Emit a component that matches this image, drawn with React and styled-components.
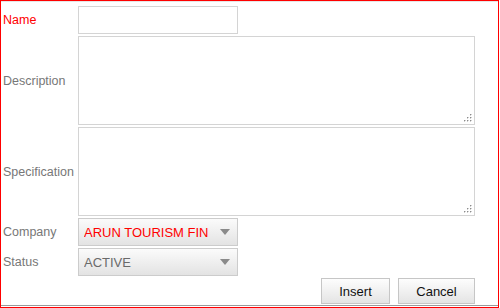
import React from "react";
import styled, { createGlobalStyle } from "styled-components";

const Global = createGlobalStyle`
  html, body { margin: 0; padding: 0; background: #fff; }
  body { font-family: "Liberation Sans", Arial, sans-serif; }
`;

const Frame = styled.div`
  width: 499px;
  height: 308px;
  box-sizing: border-box;
  border: 1px solid #ff0000;
  background: #fff;
`;

const Inner = styled.div`
  height: 305px;
  box-sizing: border-box;
  border-top: 1px solid #e6e6e6;
  border-bottom: 1px solid #9a9a9a;
  padding: 4px 0 1px 0;
`;

const FormGrid = styled.div`
  display: grid;
  grid-template-columns: 77px 397px;
  grid-template-rows: 28px 89px 89px 28px 28px 26px;
  row-gap: 2px;
`;

const Label = styled.label`
  display: flex;
  align-items: center;
  padding-left: 2px;
  font-size: 12.5px;
  color: ${(p) => (p.$required ? "#ff0000" : "#777777")};
  white-space: nowrap;
`;

const TextInput = styled.input`
  width: 160px;
  height: 28px;
  box-sizing: border-box;
  border: 1px solid #d4d4d4;
  margin: 0;
  padding: 0 5px;
  font: 13px "Liberation Sans", Arial, sans-serif;
  outline: none;
`;

const AreaWrap = styled.div`
  position: relative;
  width: 397px;
  height: 89px;
`;

const Area = styled.textarea`
  display: block;
  width: 100%;
  height: 100%;
  box-sizing: border-box;
  border: 1px solid #d4d4d4;
  margin: 0;
  padding: 3px 5px;
  resize: none;
  outline: none;
  font: 13px "Liberation Sans", Arial, sans-serif;
`;

const Grip = styled.svg`
  position: absolute;
  right: 3px;
  bottom: 3px;
  width: 9px;
  height: 9px;
  pointer-events: none;
`;

const SelectWrap = styled.div`
  position: relative;
  width: 160px;
  height: 28px;
`;

const Select = styled.select`
  appearance: none;
  -webkit-appearance: none;
  width: 100%;
  height: 100%;
  box-sizing: border-box;
  margin: 0;
  border: 1px solid #cccccc;
  border-radius: 0;
  padding: 0 29px 0 5px;
  background: linear-gradient(#fbfbfb, #e3e3e3);
  font: 13px "Liberation Sans", Arial, sans-serif;
  color: ${(p) => (p.$accent ? "#ff0000" : "#6a6a6a")};
  outline: none;
`;

const Arrow = styled.svg`
  position: absolute;
  right: 8px;
  top: 11px;
  width: 10px;
  height: 6px;
  pointer-events: none;
`;

const Actions = styled.div`
  grid-column: 2;
  display: flex;
  justify-content: flex-end;
  gap: 8px;
`;

const Button = styled.button`
  width: ${(p) => p.$w}px;
  height: 26px;
  box-sizing: border-box;
  margin: 0;
  padding: 0;
  border: 1px solid #c6c6c6;
  border-radius: 0;
  background: linear-gradient(#fdfdfd, #e4e4e4);
  font: 13px "Liberation Sans", Arial, sans-serif;
  color: #111;
`;

function ResizeGrip() {
  const dots = [
    [7, 1],
    [4, 4],
    [7, 4],
    [1, 7],
    [4, 7],
    [7, 7],
  ];
  return (
    <Grip viewBox="0 0 9 9">
      {dots.map(([x, y]) => (
        <g key={`${x}-${y}`}>
          <rect x={x} y={y} width="1" height="1" fill="#8c8c8c" />
          <rect x={x + 1} y={y} width="1" height="1" fill="#d0d0d0" />
          <rect x={x} y={y + 1} width="1" height="1" fill="#d0d0d0" />
        </g>
      ))}
    </Grip>
  );
}

function DownArrow() {
  return (
    <Arrow viewBox="0 0 10 6">
      <polygon points="0,0 10,0 5,6" fill="#8a8a8a" />
    </Arrow>
  );
}

export default function App() {
  return (
    <>
      <Global />
      <Frame>
        <Inner>
          <FormGrid>
            <Label $required>Name</Label>
            <div>
              <TextInput type="text" />
            </div>

            <Label>Description</Label>
            <AreaWrap>
              <Area />
              <ResizeGrip />
            </AreaWrap>

            <Label>Specification</Label>
            <AreaWrap>
              <Area />
              <ResizeGrip />
            </AreaWrap>

            <Label>Company</Label>
            <SelectWrap>
              <Select $accent defaultValue="arun">
                <option value="arun">ARUN TOURISM FINANCE</option>
              </Select>
              <DownArrow />
            </SelectWrap>

            <Label>Status</Label>
            <SelectWrap>
              <Select defaultValue="active">
                <option value="active">ACTIVE</option>
                <option value="inactive">INACTIVE</option>
              </Select>
              <DownArrow />
            </SelectWrap>

            <Actions>
              <Button $w={69}>Insert</Button>
              <Button $w={77}>Cancel</Button>
            </Actions>
          </FormGrid>
        </Inner>
      </Frame>
    </>
  );
}
